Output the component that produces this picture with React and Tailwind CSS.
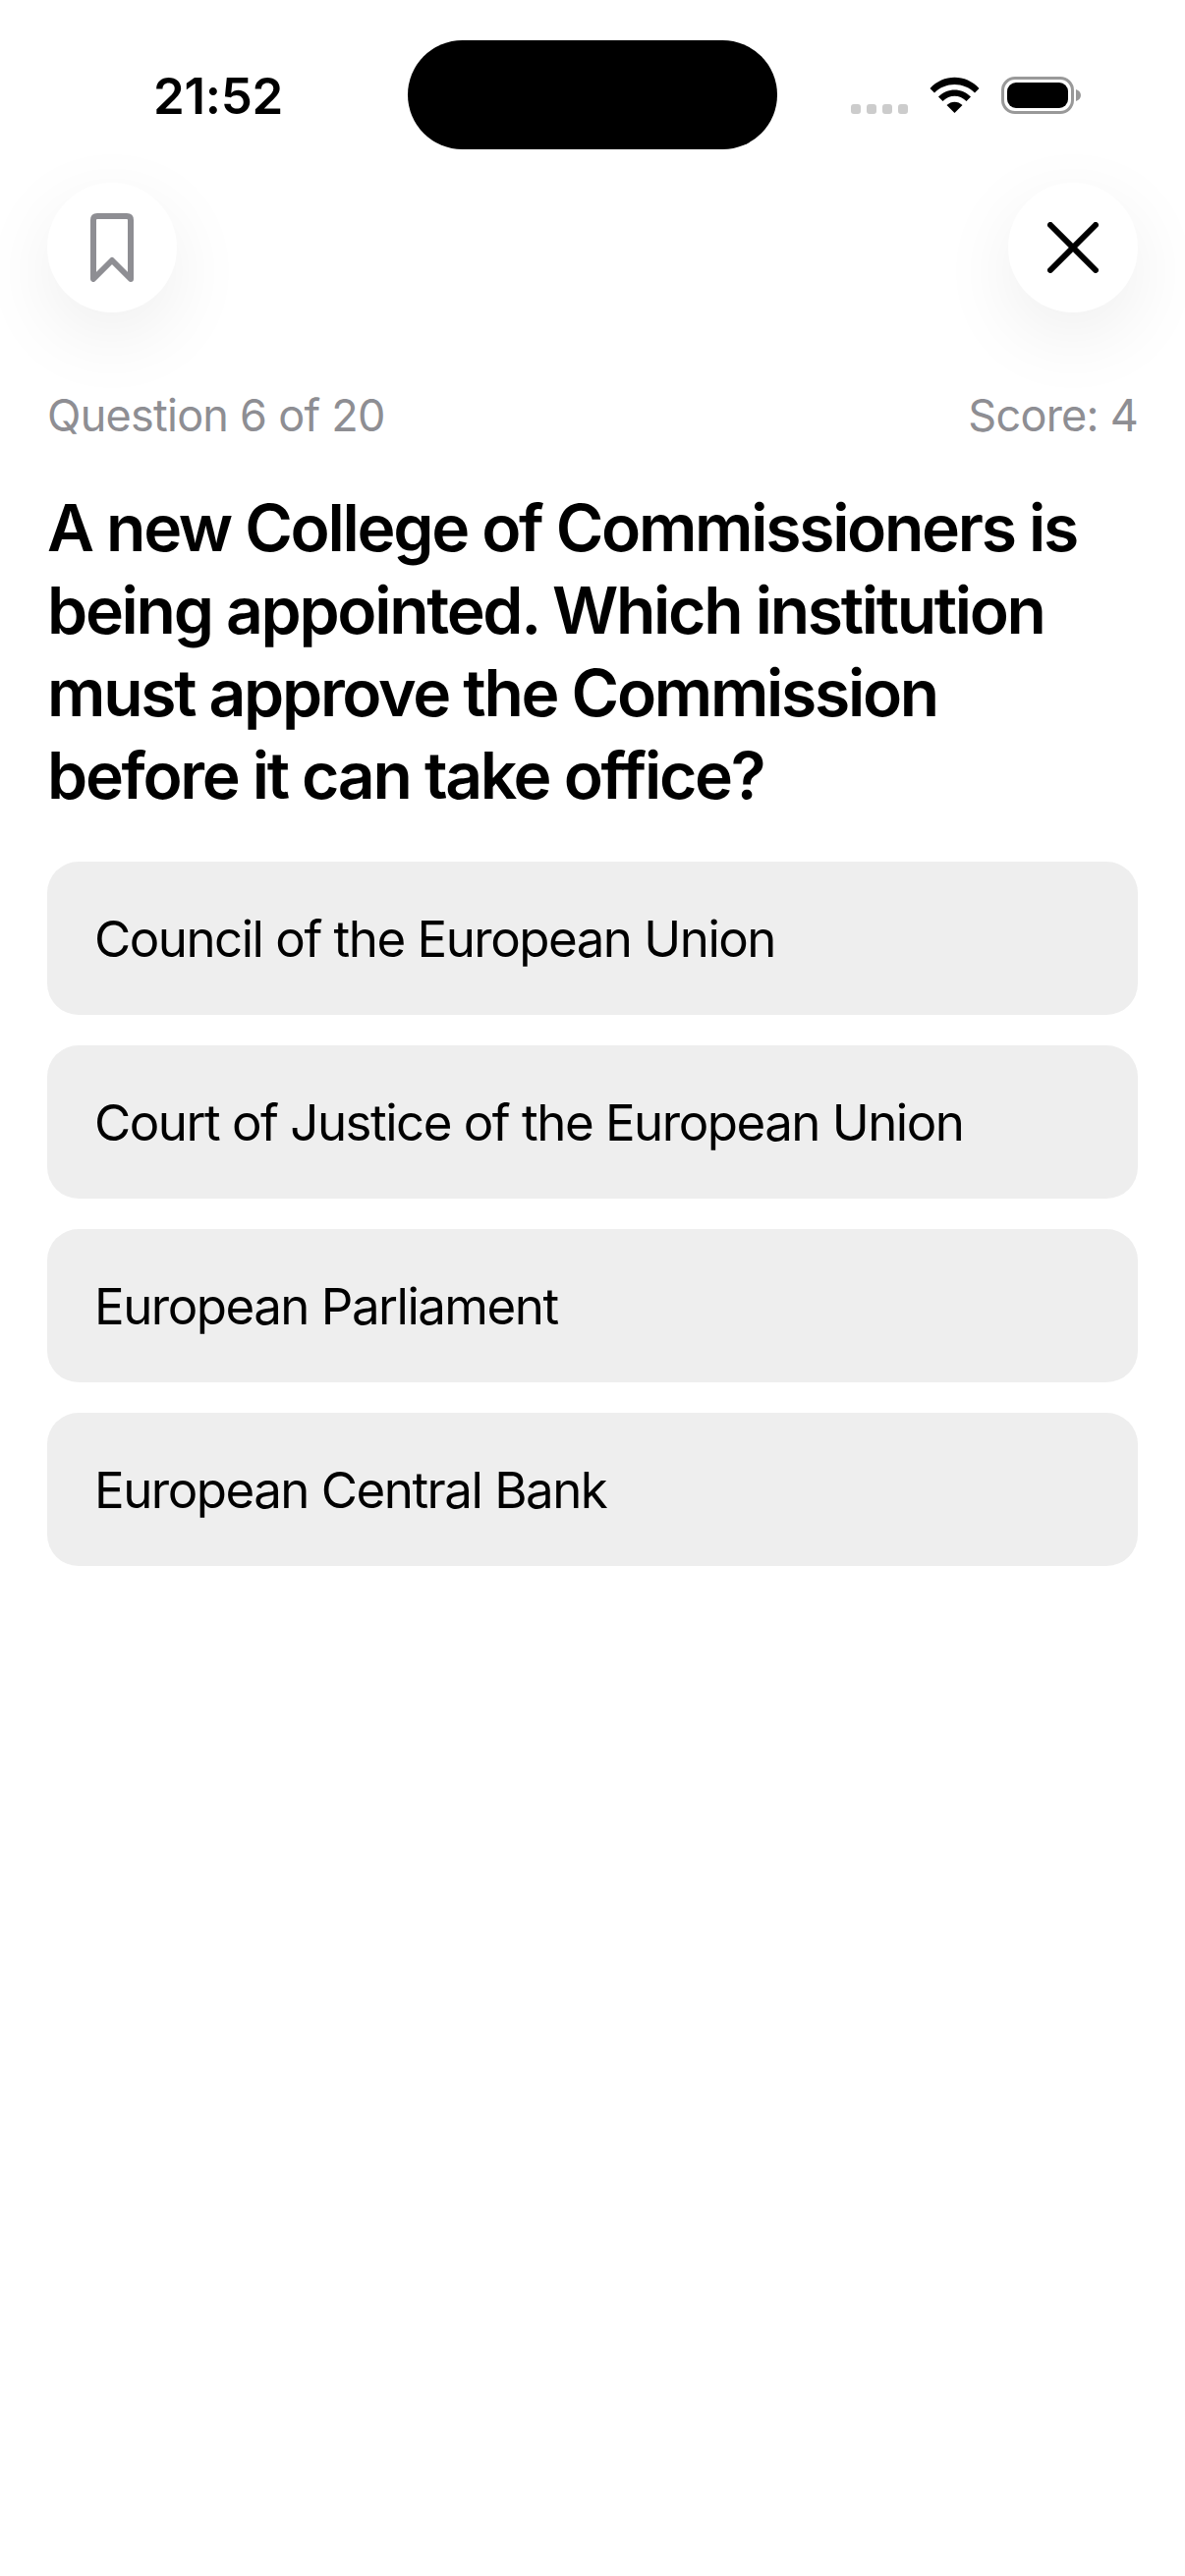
export default function App() {
  const options = ["Council of the European Union", "Court of Justice of the European Union", "European Parliament", "European Central Bank"];
  return (
    <div className="relative w-[1206px] min-h-[2622px] bg-white font-['Inter',sans-serif] text-black">
      <div className="absolute left-[415px] top-[41px] h-[111px] w-[376px] rounded-[56px] bg-black" />
      <div className="flex h-[186px] items-start justify-between">
        <div className="ml-[156px] mt-[70px] text-[51px] leading-[56px] font-semibold tracking-[-0.3px]">21:52</div>
        <div className="mr-[106px] mt-[78px] flex items-end gap-[22px]">
          <div className="flex gap-[6px]">
            <span className="h-[10px] w-[10px] rounded-[3px] bg-[#cccccc]" />
            <span className="h-[10px] w-[10px] rounded-[3px] bg-[#cccccc]" />
            <span className="h-[10px] w-[10px] rounded-[3px] bg-[#cccccc]" />
            <span className="h-[10px] w-[10px] rounded-[3px] bg-[#cccccc]" />
          </div>
          <svg width="51" height="37" viewBox="0 0 51 37" className="mb-[1px]">
            <path d="M0.5 12 C14 -3 37 -3 50.5 12 L46 16.5 C35 5 16 5 5 16.5 Z" fill="#000" />
            <path d="M9 20.5 C18 11 33 11 42 20.5 L37.5 25 C30.5 18 20.5 18 13.5 25 Z" fill="#000" />
            <path d="M17.5 29 C22 24.5 29 24.5 33.5 29 L25.5 37 Z" fill="#000" />
          </svg>
          <div className="flex items-center">
            <div className="flex h-[38px] w-[74px] items-center justify-center rounded-[14px] border-[3px] border-[#999999]">
              <div className="h-[26px] w-[62px] rounded-[9px] bg-black" />
            </div>
            <svg width="5" height="12" viewBox="0 0 5 12" className="ml-[2px]"><path d="M0 0 C3 1 5 3 5 6 C5 9 3 11 0 12 Z" fill="#999999" /></svg>
          </div>
        </div>
      </div>
      <div className="flex justify-between px-[48px]">
        <div className="flex h-[132px] w-[132px] items-center justify-center rounded-full bg-white shadow-[0_24px_80px_rgba(0,0,0,0.07)]">
          <svg width="44" height="70" viewBox="0 0 44 70" fill="none" stroke="#8e8e93" strokeWidth="6" strokeLinejoin="round" strokeLinecap="round">
            <path d="M3 67 V7 Q3 3 7 3 H37 Q41 3 41 7 V67 L22 48 Z" />
          </svg>
        </div>
        <div className="flex h-[132px] w-[132px] items-center justify-center rounded-full bg-white shadow-[0_24px_80px_rgba(0,0,0,0.07)]">
          <svg width="52" height="52" viewBox="0 0 52 52" fill="none" stroke="#000" strokeWidth="6" strokeLinecap="round">
            <path d="M3 3 L49 49 M49 3 L3 49" />
          </svg>
        </div>
      </div>
      <div className="mt-[78px] flex justify-between px-[48px] text-[45px] leading-[54px] tracking-[-0.75px] text-[#8e8e93]">
        <span>Question 6 of 20</span>
        <span>Score: 4</span>
      </div>
      <h1 className="mt-[45px] px-[48px] text-[66px] leading-[84px] font-semibold tracking-[-2.3px]">
        A new College of Commissioners is being appointed. Which institution must approve the Commission before it can take office?
      </h1>
      <div className="mt-[46px] flex flex-col gap-[31px] px-[48px]">
        {options.map((o) => (
          <div key={o} className="flex h-[156px] items-center rounded-[32px] bg-[#eeeeee] px-[48px] pt-[2px] text-[51px] leading-[60px] tracking-[-1.5px]">
            {o}
          </div>
        ))}
      </div>
    </div>
  );
}
